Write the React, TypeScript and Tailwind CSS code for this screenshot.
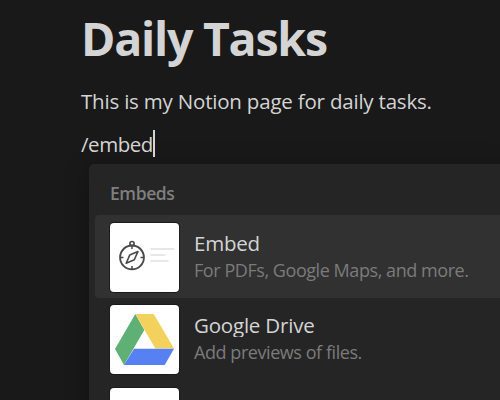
import type { ReactNode } from "react";

function CompassArt() {
  return (
    <svg viewBox="0 0 69 69" className="size-full" fill="none" stroke="#4a4a4a">
      <circle cx="22" cy="34.4" r="11.9" strokeWidth="1.9" />
      <circle cx="22" cy="20.6" r="2.1" strokeWidth="1.7" />
      <path d="M22 22.7v3.2M22 42.9v3M10.5 34.4h3M30.5 34.4h3" strokeWidth="1.5" />
      <path d="M27.9 28.6l-8.1 3.3-3.6 8.3 8.1-3.4z" strokeWidth="1.6" strokeLinejoin="round" />
      <path d="M40.5 26h24M40.5 32h15M40.5 38h18" stroke="#cfcfcf" strokeWidth="1.1" />
    </svg>
  );
}

function DriveArt() {
  return (
    <svg viewBox="0 0 69 69" className="size-full">
      <path d="M25.3 9l9 16L14 60 5 44z" fill="#5fb074" />
      <path d="M25.3 9h18.4L64 43.5H45.3z" fill="#f2d25c" />
      <path d="M24 43.7h40L54.7 60H14z" fill="#5780f2" />
    </svg>
  );
}

function MenuItem({ title, desc, selected, art }: { title: string; desc: string; selected?: boolean; art?: ReactNode }) {
  return (
    <div className={`flex h-[82.5px] shrink-0 items-start rounded-[4px] pt-[7.5px] pl-[15px] ${selected ? "bg-[#313131]" : ""}`}>
      <div className="size-[69px] shrink-0 overflow-hidden rounded-[4px] bg-white shadow-[0_0_0_1px_#1b1b1b]">{art}</div>
      <div className="mt-[7px] ml-[15px] whitespace-nowrap">
        <div className="h-[25px] overflow-hidden text-[20.5px] leading-[27px] font-medium tracking-[-0.2px] text-[#d4d4d4]">{title}</div>
        <div className="mt-[2px] h-[27px] text-[18px] leading-[27px] tracking-[-0.44px] text-[#7b7b7b]">{desc}</div>
      </div>
    </div>
  );
}

export default function App() {
  return (
    <div className="h-[400px] w-[500px] overflow-hidden bg-[#191919] font-['Open_Sans','Noto_Sans',sans-serif] text-[#d4d4d4]">
      <div className="flex h-[164px] flex-col pl-[81px] whitespace-nowrap">
        <h1 className="mt-[6px] h-[64px] text-[46.5px] leading-[64px] font-bold tracking-[-1.25px]">Daily Tasks</h1>
        <p className="mt-[15px] h-[32px] text-[20.5px] leading-[32px] tracking-[-0.2px]">This is my Notion page for daily tasks.</p>
        <div className="mt-[12px] flex h-[29px] items-center text-[20.5px] leading-[29px]">
          <span className="pt-px tracking-[-0.45px]">/embed</span>
          <span className="h-[27px] w-[2px] bg-[#d4d4d4]" />
        </div>
      </div>
      <div className="ml-[89px] flex h-[300px] w-[430px] flex-col rounded-[5px] bg-[#252525] pl-[6px] shadow-[0_4px_24px_rgba(0,0,0,0.3)]">
        <div className="h-[51px] shrink-0 pt-[15px] pl-[15px] text-[17.5px] leading-[28px] font-semibold tracking-[-0.4px] text-[#7f7f7f]">Embeds</div>
        <MenuItem title="Embed" desc="For PDFs, Google Maps, and more." selected art={<CompassArt />} />
        <MenuItem title="Google Drive" desc="Add previews of files." art={<DriveArt />} />
        <MenuItem title="" desc="" />
      </div>
    </div>
  );
}
